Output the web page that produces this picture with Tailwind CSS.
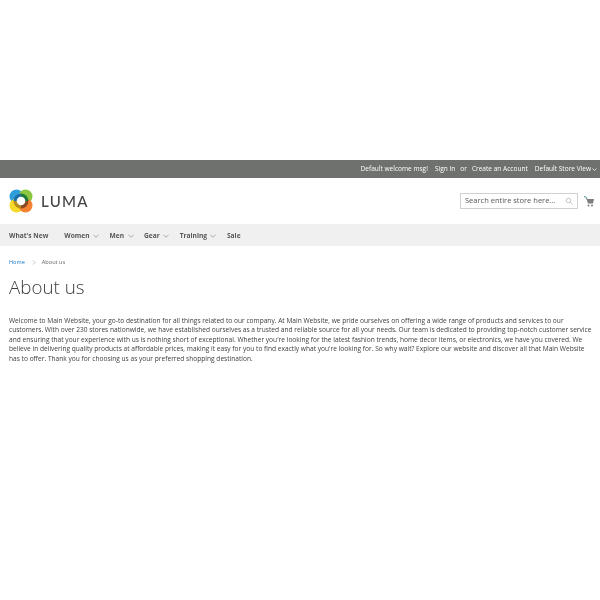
<!DOCTYPE html>
<html lang="en">
<head>
    <meta charset="UTF-8">
    <meta name="viewport" content="width=device-width, initial-scale=1.0">
    <title>About us</title>
    <script src="https://cdn.jsdelivr.net/npm/@tailwindcss/browser@4"></script>
</head>
<body class="bg-white font-['Open_Sans',sans-serif] text-[#3d3d3d] text-[6.62px] leading-[9.375px] h-[600px] overflow-hidden blur-[0.25px]">
    <div class="h-[160px]"></div>

    <!-- top bar -->
    <div class="h-[18px] bg-[#6e716e] text-white text-[6.56px] flex items-center justify-end pr-[3px]">
        <span>Default welcome msg!</span>
        <a class="ml-[7px]">Sign In</a>
        <span class="ml-[5px]">or</span>
        <a class="ml-[5px]">Create an Account</a>
        <span class="ml-[7px]">Default Store View</span>
        <svg class="ml-[1px] w-[5px] h-[5px]" viewBox="0 0 10 10" fill="none" stroke="#fff" stroke-width="1.5"><path d="M1 3l4 4 4-4"/></svg>
    </div>

    <!-- header -->
    <div class="h-[46px] flex items-center justify-between pl-[9px] pr-[6px]">
        <div class="flex items-center gap-[8px]">
            <svg class="w-[24px] h-[24px]" viewBox="0 0 24 24">
                <circle cx="7.5" cy="7.5" r="7" fill="#2f9fdc"/>
                <circle cx="16.5" cy="7.5" r="7" fill="#8cc63f"/>
                <circle cx="7.5" cy="16.5" r="7" fill="#f7d92c"/>
                <circle cx="16.5" cy="16.5" r="7" fill="#f58233"/>
                <path d="M12 12V4.500A7.500 7.500 0 0 1 19.500 12z" fill="#1f7a3d"/>
                <path d="M12 12H4.500A7.500 7.500 0 0 1 12 4.500z" fill="#1d6fa8"/>
                <path d="M12 12H19.500A7.500 7.500 0 0 1 12 19.500z" fill="#8a4b24"/>
                <path d="M12 12V19.500A7.500 7.500 0 0 1 4.500 12z" fill="#b58a1f"/>
                <circle cx="12" cy="12" r="4.300" fill="#fff"/>
            </svg>
            <span class="font-['Lato',sans-serif] font-medium text-[15px] tracking-[1.3px] text-[#444] leading-none">LUMA</span>
        </div>
        <div class="flex items-center gap-[6px]">
            <div class="w-[118px] h-[16px] border border-[#d0d0d0] flex items-center justify-between pl-[4px] pr-[4px] text-[7.5px] text-[#575757]">
                <span>Search entire store here...</span>
                <svg class="w-[8px] h-[8px]" viewBox="0 0 16 16" fill="none" stroke="#b0b0b0" stroke-width="1.500"><circle cx="7" cy="7" r="4.500"/><path d="M10.500 10.500L15 15"/></svg>
            </div>
            <svg class="w-[10px] h-[11px]" viewBox="0 0 20 22"><path d="M0 1l5 2 1 4" fill="none" stroke="#4f8a8a" stroke-width="2"/><path d="M5 6h15l-2 9H8z" fill="#7d7d7d"/><circle cx="9" cy="19" r="2" fill="#7d7d7d"/><circle cx="16" cy="19" r="2" fill="#7d7d7d"/></svg>
        </div>
    </div>

    <!-- nav -->
    <div class="h-[22px] bg-[#f0f0f0] flex items-center pl-[9px] pt-[1px] font-bold text-[#575757]">
        <span>What's New</span>
        <span class="ml-[16px]">Women</span>
        <svg class="ml-[3.5px] w-[6px] h-[6px]" viewBox="0 0 14 14" fill="none" stroke="#666" stroke-width="1.200"><path d="M1 4l6 6 6-6"/></svg>
        <span class="ml-[10.5px]">Men</span>
        <svg class="ml-[3.5px] w-[6px] h-[6px]" viewBox="0 0 14 14" fill="none" stroke="#666" stroke-width="1.200"><path d="M1 4l6 6 6-6"/></svg>
        <span class="ml-[10.500px]">Gear</span>
        <svg class="ml-[3.5px] w-[6px] h-[6px]" viewBox="0 0 14 14" fill="none" stroke="#666" stroke-width="1.200"><path d="M1 4l6 6 6-6"/></svg>
        <span class="ml-[10.500px]">Training</span>
        <svg class="ml-[3.5px] w-[6px] h-[6px]" viewBox="0 0 14 14" fill="none" stroke="#666" stroke-width="1.200"><path d="M1 4l6 6 6-6"/></svg>
        <span class="ml-[10.500px]">Sale</span>
    </div>

    <!-- breadcrumb -->
    <div class="flex items-center pl-[9px] pt-[11px] text-[5.6px] leading-[10px] text-[#666]">
        <a class="text-[#1979c3]">Home</a>
        <svg class="ml-[7px] w-[4px] h-[5px]" viewBox="0 0 8 10" fill="none" stroke="#808080" stroke-width="1"><path d="M2 1l4 4-4 4"/></svg>
        <span class="ml-[6px]">About us</span>
    </div>

    <h1 class="pl-[9px] pt-[8px] text-[18.75px] leading-[24px] font-light">About us</h1>

    <p class="pl-[9px] pr-[6px] pt-[17px]">Welcome to Main Website, your go-to destination for all things related to our company. At Main Website, we pride ourselves on offering a wide range of products and services to our customers. With over 230 stores nationwide, we have established ourselves as a trusted and reliable source for all your needs. Our team is dedicated to providing top-notch customer service and ensuring that your experience with us is nothing short of exceptional. Whether you're looking for the latest fashion trends, home decor items, or electronics, we have you covered. We believe in delivering quality products at affordable prices, making it easy for you to find exactly what you're looking for. So why wait? Explore our website and discover all that Main Website has to offer. Thank you for choosing us as your preferred shopping destination.</p>
</body>
</html>
